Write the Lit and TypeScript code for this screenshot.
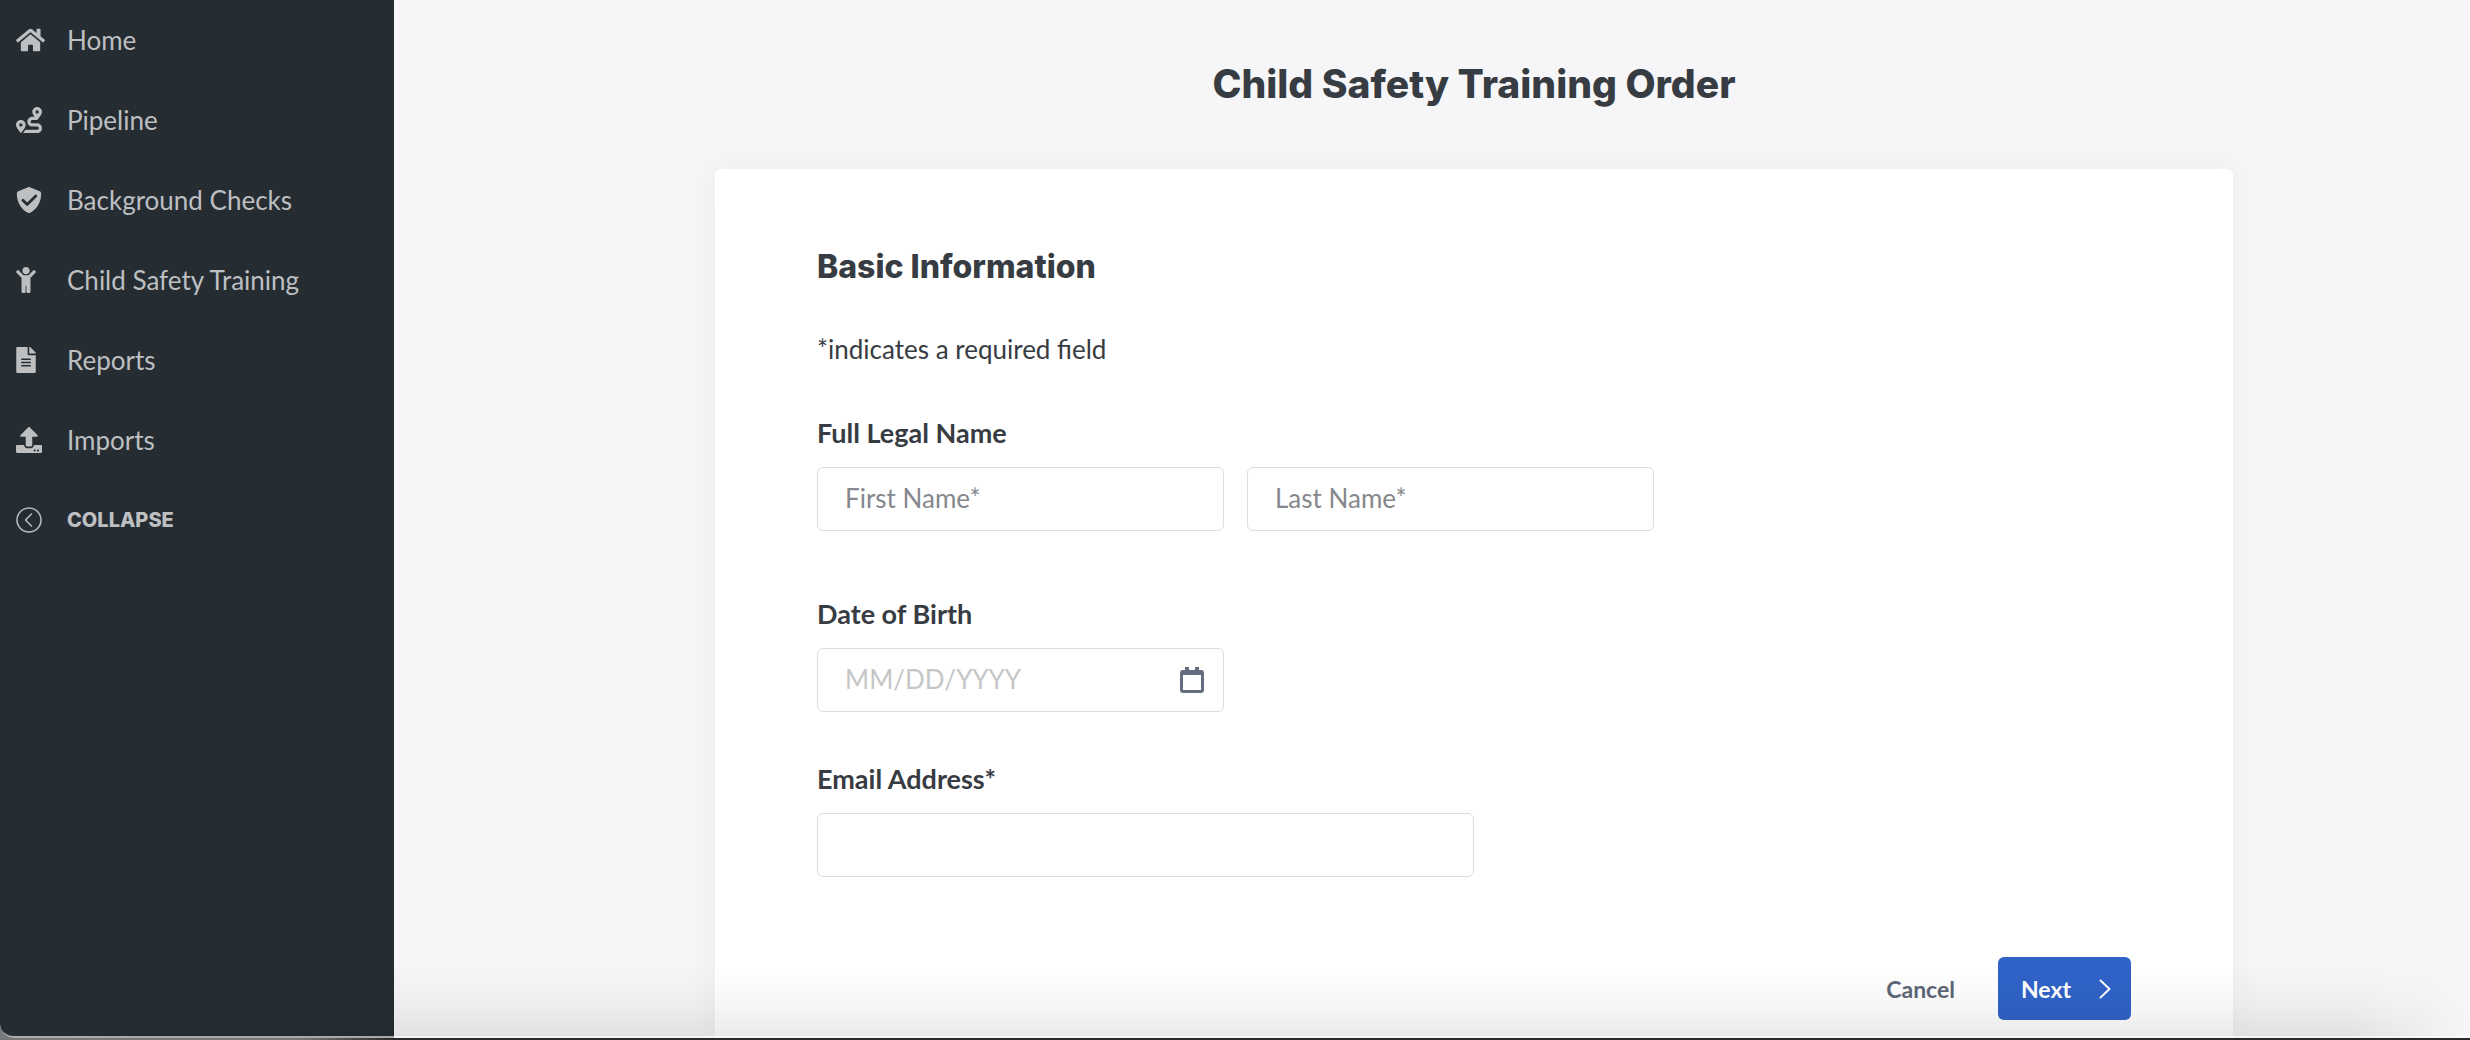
import { LitElement, html, css, svg } from "lit";
import { customElement, state } from "lit/decorators.js";

const icons = {
  home: { w: 29, box: "0 0 576 512", body: svg`<path d="M280.37 148.26L96 300.11V464a16 16 0 0 0 16 16l112.06-.29a16 16 0 0 0 15.92-16V368a16 16 0 0 1 16-16h64a16 16 0 0 1 16 16v95.64a16 16 0 0 0 16 16.05L464 480a16 16 0 0 0 16-16V300L295.67 148.26a12.19 12.19 0 0 0-15.3 0zM571.6 251.47L488 182.56V44.05a12 12 0 0 0-12-12h-56a12 12 0 0 0-12 12v72.61L318.47 43a48 48 0 0 0-61 0L4.34 251.47a12 12 0 0 0-1.6 16.9l25.5 31A12 12 0 0 0 45.15 301l235.22-193.74a12.19 12.19 0 0 1 15.3 0L530.9 301a12 12 0 0 0 16.9-1.6l25.5-31a12 12 0 0 0-1.7-16.93z"/>` },
  route: { w: 26, box: "0 0 512 512", body: svg`<path d="M416 320h-96c-17.6 0-32-14.4-32-32s14.4-32 32-32h96s96-107 96-160-43-96-96-96-96 43-96 96c0 25.5 22.2 63.4 45.3 96H320c-52.9 0-96 43.1-96 96s43.1 96 96 96h96c17.6 0 32 14.4 32 32s-14.4 32-32 32H185.5c-16 24.8-33.8 47.7-47.3 64H416c52.9 0 96-43.1 96-96s-43.1-96-96-96zm0-256c17.7 0 32 14.3 32 32s-14.3 32-32 32-32-14.3-32-32 14.3-32 32-32zM96 256c-53 0-96 43-96 96s96 160 96 160 96-107 96-160-43-96-96-96zm0 128c-17.7 0-32-14.3-32-32s14.3-32 32-32 32 14.3 32 32-14.3 32-32 32z"/>` },
  shield: { w: 26, box: "0 0 512 512", body: svg`<path d="M466.5 83.7l-192-80a48.15 48.15 0 0 0-36.9 0l-192 80C27.7 91.1 16 108.6 16 128c0 198.5 114.5 335.7 221.5 380.3 11.8 4.9 25.1 4.9 36.9 0C360.1 472.6 496 349.3 496 128c0-19.4-11.7-36.9-29.5-44.3z"/><path class="cut" d="M136 262l84 84 170-170"/>` },
  child: { w: 20, box: "0 0 384 512", body: svg`<path d="M120 72c0-39.765 32.235-72 72-72s72 32.235 72 72c0 39.764-32.235 72-72 72s-72-32.236-72-72zm254.627 1.373c-12.496-12.497-32.758-12.497-45.254 0L242.745 160H141.254L54.627 73.373c-12.496-12.497-32.758-12.497-45.254 0-12.497 12.497-12.497 32.758 0 45.255L104 213.254V480c0 17.673 14.327 32 32 32h16c17.673 0 32-14.327 32-32V368h16v112c0 17.673 14.327 32 32 32h16c17.673 0 32-14.327 32-32V213.254l94.627-94.627c12.497-12.497 12.497-32.757 0-45.254z"/>` },
  file: { w: 20, box: "0 0 384 512", body: svg`<path d="M224 136V0H24C10.7 0 0 10.7 0 24v464c0 13.3 10.7 24 24 24h336c13.3 0 24-10.7 24-24V160H248c-13.2 0-24-10.8-24-24zm64 236c0 6.6-5.4 12-12 12H108c-6.6 0-12-5.4-12-12v-8c0-6.6 5.4-12 12-12h168c6.6 0 12 5.4 12 12v8zm0-64c0 6.6-5.4 12-12 12H108c-6.6 0-12-5.4-12-12v-8c0-6.6 5.4-12 12-12h168c6.6 0 12 5.4 12 12v8zm0-72v8c0 6.6-5.4 12-12 12H108c-6.6 0-12-5.4-12-12v-8c0-6.6 5.4-12 12-12h168c6.6 0 12 5.4 12 12zm96-114.1v6.1H256V0h6.1c6.4 0 12.5 2.5 17 7l97.9 98c4.5 4.5 7 10.6 7 16.9z"/>` },
  upload: { w: 26, box: "0 0 512 512", body: svg`<path d="M296 384h-80c-13.3 0-24-10.7-24-24V192h-87.7c-17.8 0-26.7-21.5-14.1-34.1L242.3 5.7c7.5-7.5 19.8-7.5 27.3 0l152.2 152.2c12.6 12.6 3.7 34.1-14.1 34.1H320v168c0 13.3-10.7 24-24 24zm216-8v112c0 13.3-10.7 24-24 24H24c-13.3 0-24-10.7-24-24V376c0-13.3 10.7-24 24-24h136v8c0 30.9 25.1 56 56 56h80c30.9 0 56-25.1 56-56v-8h136c13.3 0 24 10.7 24 24zm-124 88c0-11-9-20-20-20s-20 9-20 20 9 20 20 20 20-9 20-20zm64 0c0-11-9-20-20-20s-20 9-20 20 9 20 20 20 20-9 20-20z"/>` },
  collapse: { w: 26, box: "0 0 26 26", body: svg`<circle class="line" cx="13" cy="13" r="12"/><path class="line" d="M15.5 7L9.5 13l6 6"/>` },
};

type IconName = keyof typeof icons;

const links: { label: string; icon: IconName }[] = [
  { label: "Home", icon: "home" },
  { label: "Pipeline", icon: "route" },
  { label: "Background Checks", icon: "shield" },
  { label: "Child Safety Training", icon: "child" },
  { label: "Reports", icon: "file" },
  { label: "Imports", icon: "upload" },
];

const icon = (name: IconName) => {
  const { w, box, body } = icons[name];
  return html`<svg class="icon" width=${w} height="26" viewBox=${box} aria-hidden="true">${body}</svg>`;
};

@customElement("side-nav")
export class SideNav extends LitElement {
  @state() private collapsed = false;

  static styles = css`
    :host { display: block; flex: none; background: #252d33; }
    .nav { display: flex; flex-direction: column; width: 394px; }
    .nav.collapsed { width: 60px; }
    .item {
      display: flex; align-items: center; box-sizing: border-box; height: 80px;
      padding: 0 16px; border: 0; background: none; text-align: left;
      font: 400 26px/32px Lato, "Open Sans", sans-serif; color: #bdbfc1;
      text-decoration: none; white-space: nowrap; cursor: pointer;
    }
    .slot { display: flex; flex: none; width: 51px; }
    .icon { display: block; fill: #bdbfc1; }
    .cut { fill: none; stroke: #252d33; stroke-width: 54; stroke-linecap: round; stroke-linejoin: round; }
    .line { fill: none; stroke: #bdbfc1; stroke-width: 1.5; stroke-linecap: round; stroke-linejoin: round; }
    .toggle { font: 800 20px/32px Inter, sans-serif; }
    .collapsed .label { display: none; }
  `;

  render() {
    return html`
      <nav class="nav ${this.collapsed ? "collapsed" : ""}">
        ${links.map(
          (l) => html`<a class="item" href="#"><span class="slot">${icon(l.icon)}</span><span class="label">${l.label}</span></a>`,
        )}
        <button class="item toggle" type="button" aria-label="Collapse" @click=${() => (this.collapsed = !this.collapsed)}>
          <span class="slot">${icon("collapse")}</span><span class="label">COLLAPSE</span>
        </button>
      </nav>
    `;
  }
}

@customElement("order-form")
export class OrderForm extends LitElement {
  static styles = css`
    :host { display: flex; flex-direction: column; flex: 1; }
    .card {
      flex: 1; box-sizing: border-box; padding: 78px 102px 16px; border-radius: 6px 6px 0 0;
      background: #fff; box-shadow: 0 0 32px rgba(50, 50, 80, 0.05);
      font: 400 26px/32px Lato, "Open Sans", sans-serif; color: #373c43;
    }
    .heading { margin: 0; font: 800 32px/40px Inter, sans-serif; }
    .hint { margin: 46px 0 0; }
    .group { margin: 0; padding: 0; border: 0; min-width: 0; }
    .name { margin-top: 52px; }
    .birth { margin-top: 67px; }
    .email { margin-top: 51px; }
    .label { display: block; padding: 0; margin-bottom: 18px; font-size: 27px; font-weight: 700; }
    .pair { display: flex; gap: 23px; }
    .box {
      display: flex; align-items: center; box-sizing: border-box; width: 407px; height: 64px;
      border: 1px solid #dcdde0; border-radius: 6px; background: #fff;
    }
    .box.wide { width: 657px; }
    .box:focus-within { border-color: #3062c8; }
    .input {
      flex: 1; min-width: 0; box-sizing: border-box; height: 60px; padding: 0 0 3px 27px;
      border: 0; outline: 0; background: none; font: inherit; color: inherit;
    }
    .input::placeholder { color: #85888c; opacity: 1; }
    .date::placeholder { color: #c6c6c6; }
    .picker { display: flex; padding: 0 19px; border: 0; background: none; cursor: pointer; }
    .actions { display: flex; justify-content: flex-end; align-items: center; gap: 43px; margin-top: 80px; }
    .cancel, .next { border: 0; font: 700 23px/32px Lato, "Open Sans", sans-serif; cursor: pointer; }
    .cancel { padding: 0; background: none; color: #5e6777; }
    .next {
      display: flex; align-items: center; justify-content: space-between; box-sizing: border-box;
      width: 133px; height: 63px; padding: 0 20px 0 23px; border-radius: 6px;
      background: #3062c8; color: #fff;
    }
  `;

  render() {
    return html`
      <form class="card" @submit=${(e: Event) => e.preventDefault()}>
        <h2 class="heading">Basic Information</h2>
        <p class="hint">*indicates a required field</p>
        <fieldset class="group name">
          <legend class="label">Full Legal Name</legend>
          <div class="pair">
            <div class="box"><input class="input" type="text" aria-label="First Name" placeholder="First Name*" required /></div>
            <div class="box"><input class="input" type="text" aria-label="Last Name" placeholder="Last Name*" required /></div>
          </div>
        </fieldset>
        <div class="group birth">
          <label class="label" for="dob">Date of Birth</label>
          <div class="box">
            <input class="input date" id="dob" type="text" placeholder="MM/DD/YYYY" />
            <button class="picker" type="button" aria-label="Choose date">
              <svg width="24" height="26" viewBox="0 0 24 26" aria-hidden="true">
                <path fill="#646c7d" fill-rule="evenodd" d="M5 0h4v3h6V0h4v3h2a3 3 0 0 1 3 3v17a3 3 0 0 1-3 3H3a3 3 0 0 1-3-3V6a3 3 0 0 1 3-3h2zM3 8v15h18V8z" />
              </svg>
            </button>
          </div>
        </div>
        <div class="group email">
          <label class="label" for="email">Email Address*</label>
          <div class="box wide"><input class="input" id="email" type="email" required /></div>
        </div>
        <div class="actions">
          <button class="cancel" type="button">Cancel</button>
          <button class="next" type="submit">
            Next
            <svg width="12" height="20" viewBox="0 0 12 20" aria-hidden="true">
              <path d="M1.5 1.5L10.5 10l-9 8.500" fill="none" stroke="#fff" stroke-width="2" stroke-linecap="round" stroke-linejoin="round" />
            </svg>
          </button>
        </div>
      </form>
    `;
  }
}

@customElement("app-root")
export class AppRoot extends LitElement {
  static styles = css`
    :host { display: block; background: linear-gradient(to right, #77787a 300px, #2a2a2c 394px); font-variant-ligatures: none; }
    .frame { box-sizing: border-box; min-height: 100vh; display: flex; padding-bottom: 2px; }
    .window {
      position: relative; display: flex; flex: 1; overflow: hidden;
      border-bottom-left-radius: 14px; background: #f6f6f8;
    }
    .main { flex: 1; display: flex; flex-direction: column; align-items: center; padding-left: 84px; }
    .title {
      margin: 0; padding: 60px 0 61px;
      font: 800 39px/48px Inter, sans-serif; color: #373c43;
    }
    .form { width: 90%; max-width: 1518px; }
    .shade {
      position: absolute; left: 0; right: 0; bottom: 0; height: 72px; pointer-events: none;
      background: linear-gradient(to bottom, rgba(20, 20, 20, 0), rgba(20, 20, 20, 0.03) 50%, rgba(20, 20, 20, 0.09));
      -webkit-mask-image: linear-gradient(to right, transparent 40px, #000 140px, #000 calc(100% - 120px), transparent);
      mask-image: linear-gradient(to right, transparent 40px, #000 140px, #000 calc(100% - 120px), transparent);
    }
    .edge {
      position: absolute; inset: 0; pointer-events: none; border-bottom: 2px solid rgba(255, 255, 255, 0.6);
      border-bottom-left-radius: 14px;
    }
  `;

  render() {
    return html`
      <div class="frame">
        <div class="window">
          <side-nav></side-nav>
          <main class="main">
            <h1 class="title">Child Safety Training Order</h1>
            <order-form class="form"></order-form>
          </main>
          <div class="shade"></div>
          <div class="edge"></div>
        </div>
      </div>
    `;
  }
}
